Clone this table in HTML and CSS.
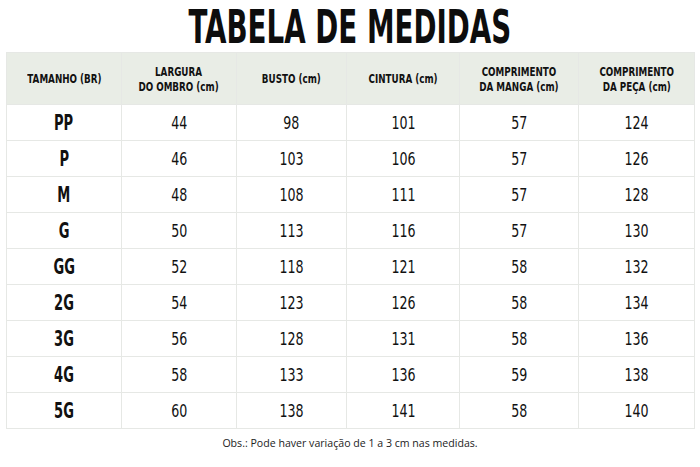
FILE: index.html
```html
<!DOCTYPE html>
<html lang="pt-BR">
<head>
<meta charset="utf-8">
<title>Tabela de Medidas</title>
<link rel="stylesheet" href="styles.css">
</head>
<body>
<div class="page">
  <h1 class="title"><span>TABELA DE MEDIDAS</span></h1>
  <table class="sizes">
    <colgroup>
      <col class="c1"><col class="c2"><col class="c3"><col class="c4"><col class="c5"><col class="c6">
    </colgroup>
    <thead>
      <tr>
        <th><span>TAMANHO (BR)</span></th>
        <th><span>LARGURA<br>DO OMBRO (cm)</span></th>
        <th><span>BUSTO (cm)</span></th>
        <th><span>CINTURA (cm)</span></th>
        <th><span>COMPRIMENTO<br>DA MANGA (cm)</span></th>
        <th><span>COMPRIMENTO<br>DA PEÇA (cm)</span></th>
      </tr>
    </thead>
    <tbody>
      <tr><td class="size"><span>PP</span></td><td><span>44</span></td><td><span>98</span></td><td><span>101</span></td><td><span>57</span></td><td><span>124</span></td></tr>
      <tr><td class="size"><span>P</span></td><td><span>46</span></td><td><span>103</span></td><td><span>106</span></td><td><span>57</span></td><td><span>126</span></td></tr>
      <tr><td class="size"><span>M</span></td><td><span>48</span></td><td><span>108</span></td><td><span>111</span></td><td><span>57</span></td><td><span>128</span></td></tr>
      <tr><td class="size"><span>G</span></td><td><span>50</span></td><td><span>113</span></td><td><span>116</span></td><td><span>57</span></td><td><span>130</span></td></tr>
      <tr><td class="size"><span>GG</span></td><td><span>52</span></td><td><span>118</span></td><td><span>121</span></td><td><span>58</span></td><td><span>132</span></td></tr>
      <tr><td class="size"><span>2G</span></td><td><span>54</span></td><td><span>123</span></td><td><span>126</span></td><td><span>58</span></td><td><span>134</span></td></tr>
      <tr><td class="size"><span>3G</span></td><td><span>56</span></td><td><span>128</span></td><td><span>131</span></td><td><span>58</span></td><td><span>136</span></td></tr>
      <tr><td class="size"><span>4G</span></td><td><span>58</span></td><td><span>133</span></td><td><span>136</span></td><td><span>59</span></td><td><span>138</span></td></tr>
      <tr><td class="size"><span>5G</span></td><td><span>60</span></td><td><span>138</span></td><td><span>141</span></td><td><span>58</span></td><td><span>140</span></td></tr>
    </tbody>
  </table>
  <p class="note">Obs.: Pode haver variação de 1 a 3 cm nas medidas.</p>
</div>
</body>
</html>
```
FILE: styles.css
```css
html, body {
  margin: 0;
  padding: 0;
  background: #ffffff;
}
.page {
  width: 700px;
  height: 467px;
  padding: 0 6px 0 6px;
  box-sizing: border-box;
  font-family: "DejaVu Sans Condensed", "DejaVu Sans", sans-serif;
  color: #111111;
}
.title {
  margin: 0;
  height: 52px;
  text-align: center;
  font-size: 46px;
  font-weight: 700;
  line-height: 54px;
  color: #0d0d0d;
}
.title span {
  display: inline-block;
  transform: scaleX(0.67);
}
.sizes {
  width: 688px;
  border-collapse: collapse;
  table-layout: fixed;
}
.c1 { width: 115px; }
.c2 { width: 115px; }
.c3 { width: 110px; }
.c4 { width: 113px; }
.c5 { width: 119px; }
.c6 { width: 116px; }
.sizes th, .sizes td {
  border: 1px solid #e6e8e5;
  text-align: center;
  padding: 0;
  white-space: nowrap;
}
.sizes th span, .sizes td span {
  display: inline-block;
}
.sizes th {
  background: #e9ede6;
  height: 51px;
  font-size: 13px;
  font-weight: 700;
  line-height: 15px;
  color: #111111;
}
.sizes th span {
  transform: scaleX(0.75);
}
.sizes td {
  height: 35px;
  font-size: 18px;
  font-weight: 400;
  color: #111111;
}
.sizes td span {
  transform: scaleX(0.78);
}
.sizes td.size {
  font-size: 22px;
  font-weight: 700;
}
.sizes td.size span {
  transform: scaleX(0.66);
}
.note {
  margin: 7px 0 0 0;
  text-align: center;
  font-family: "Open Sans", "Noto Sans", sans-serif;
  font-size: 10.6px;
  color: #222222;
}
```
